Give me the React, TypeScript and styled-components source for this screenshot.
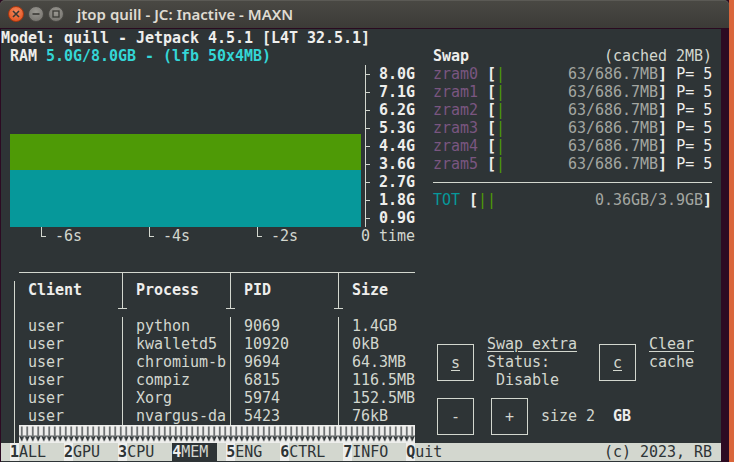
import React from "react";
import styled, { createGlobalStyle, css } from "styled-components";

// terminal cell size
const CW = 9;
const LH = 18;
const LINE = "#d3d7cf";

const at = (col: number, row: number, w: number, h: number) => css`
  grid-column: ${col + 1} / span ${w};
  grid-row: ${row + 1} / span ${h};
`;

const vline = (x = 4, y = 0, h = "100%") =>
  `linear-gradient(${LINE}, ${LINE}) ${x}px ${y}px / 1px ${h} no-repeat`;
const hline = (x = 0, y = 9, w = "100%") =>
  `linear-gradient(${LINE}, ${LINE}) ${x}px ${y}px / ${w} 1px no-repeat`;

const GlobalStyle = createGlobalStyle`
  html, body { margin: 0; padding: 0; }
  body {
    width: 734px;
    height: 462px;
    overflow: hidden;
    background: #d9663b;
  }
`;

const Window = styled.div`
  width: 729px;
  height: 462px;
  display: flex;
  flex-direction: column;
  background: #2c0a22;
`;

const TitleBar = styled.div`
  height: 28px;
  flex: none;
  display: flex;
  align-items: center;
  gap: 4px;
  padding-left: 8px;
  background: linear-gradient(#4a4944, #3c3b37);
  box-shadow: inset 0 1px 0 #5b5a55;
  border-radius: 5px 5px 0 0;
  border-bottom: 1px solid #2a0a20;
`;

const WinButton = styled.span<{ $close?: boolean }>`
  width: 16px;
  height: 16px;
  box-sizing: border-box;
  border-radius: 50%;
  display: flex;
  align-items: center;
  justify-content: center;
  background: ${(p) =>
    p.$close
      ? "radial-gradient(circle at 50% 35%, #f58a5e, #df4a16)"
      : "radial-gradient(circle at 50% 35%, #9a9892, #6f6d68)"};
  border: 1px solid ${(p) => (p.$close ? "#a9380f" : "#4a4945")};
`;

const Title = styled.span`
  margin-left: 9px;
  color: #dfdbd2;
  font-family: "Noto Sans", "Open Sans", sans-serif;
  font-size: 15px;
  font-weight: 600;
`;

const Body = styled.div`
  flex: 1;
  display: flex;
  padding: 0 8px 0 1px;
`;

const Terminal = styled.div`
  display: grid;
  grid-template-columns: repeat(80, ${CW}px);
  grid-template-rows: repeat(24, ${LH}px);
  background: #2e3436;
  color: #d3d7cf;
  font-family: "DejaVu Sans Mono", "Liberation Mono", monospace;
  font-size: 15px;
  line-height: ${LH}px;
  letter-spacing: -0.03px;
  white-space: pre;
`;

const Bold = styled.span`
  font-weight: bold;
  color: #eeeeec;
`;
const Cyan = styled.span`
  color: #34d6d6;
`;
const Teal = styled.span`
  color: #06989a;
`;
const Purple = styled.span`
  color: #7a5680;
`;
const Green = styled.span`
  color: #4e9a06;
`;
const Dim = styled.span`
  color: #a3a6a1;
`;
const Bright = styled.span`
  color: #eeeeec;
`;

const Header = styled.div`
  ${at(0, 0, 80, 1)};
  font-weight: bold;
  color: #eeeeec;
`;

const RamLine = styled.div`
  ${at(0, 1, 47, 1)};
  font-weight: bold;
  color: #eeeeec;
`;

const Chart = styled.div`
  ${at(1, 2, 39, 9)};
  display: flex;
  flex-direction: column;
  justify-content: flex-end;
`;

const Band = styled.div<{ $color: string; $h: number }>`
  height: ${(p) => p.$h}px;
  background: ${(p) => p.$color};
`;

const YAxis = styled.div`
  ${at(40, 2, 6, 9)};
  display: flex;
  flex-direction: column;
`;

const YRow = styled.div`
  display: flex;
  height: ${LH}px;
`;

const YTick = styled.span`
  width: ${2 * CW}px;
  flex: none;
  background: ${vline()}, ${hline(4, 9, "5px")};
`;

const YLabel = styled.span`
  font-weight: bold;
  color: #eeeeec;
`;

const XAxis = styled.div`
  ${at(1, 11, 45, 1)};
  display: flex;
  padding-left: ${3 * CW}px;
`;

const XTick = styled.span`
  width: ${12 * CW}px;
  flex: none;
  display: flex;
`;

const Corner = styled.span`
  width: ${CW}px;
  margin-right: ${CW}px;
  flex: none;
  background: ${vline(4, 0, "10px")}, ${hline(4, 9, "5px")};
`;

const SwapPanel = styled.div`
  ${at(48, 1, 31, 9)};
  display: flex;
  flex-direction: column;
`;

const Line = styled.div`
  height: ${LH}px;
`;

const Rule = styled.div`
  height: ${LH}px;
  background: ${hline()};
`;

const Table = styled.div`
  ${at(1, 13, 45, 10)};
  display: grid;
  grid-template-columns:
    ${CW}px ${11 * CW}px ${CW}px ${11 * CW}px ${CW}px ${11 * CW}px
    ${CW}px ${8 * CW}px;
  grid-template-rows: repeat(10, ${LH}px);
`;

const LeftRule = styled.div`
  grid-column: 1;
  grid-row: 2 / span 9;
  background: ${vline()};
`;

const TopRule = styled.div`
  grid-column: 2 / span 7;
  grid-row: 1;
  background: ${hline()};
`;

const HeadSep = styled.div<{ $col: number }>`
  grid-column: ${(p) => p.$col};
  grid-row: 1 / span 3;
  background: ${vline(4, 9, "37px")}, ${hline(0, 45)};
`;

const BodySep = styled.div<{ $col: number }>`
  grid-column: ${(p) => p.$col};
  grid-row: 4 / span 6;
  background: ${vline()};
`;

const HeadCell = styled.div<{ $col: number }>`
  grid-column: ${(p) => p.$col};
  grid-row: 2;
  padding-left: ${CW}px;
  font-weight: bold;
  color: #eeeeec;
`;

const BodyCell = styled.div<{ $col: number }>`
  grid-column: ${(p) => p.$col};
  grid-row: 4 / span 6;
  padding-left: ${CW}px;
  display: flex;
  flex-direction: column;
`;

const Scroll = styled.div`
  grid-column: 2 / span 7;
  grid-row: 10;
  background: #eeeeec;
  display: flex;
`;

const Controls = styled.div`
  ${at(48, 17, 31, 6)};
  display: flex;
  flex-direction: column;
`;

const ControlRow = styled.div`
  display: flex;
  gap: ${CW}px;
  height: ${3 * LH}px;
`;

const Key = styled.span`
  box-sizing: border-box;
  width: 37px;
  height: 37px;
  margin: 9px 4px 8px;
  flex: none;
  border: 1px solid ${LINE};
  display: flex;
  align-items: center;
  justify-content: center;
`;

const Hot = styled.span`
  text-decoration: underline;
  text-underline-offset: 2px;
`;

const Info = styled.div<{ $cols: number }>`
  width: ${(p) => p.$cols * CW}px;
  flex: none;
  display: flex;
  flex-direction: column;
`;

const SizeText = styled.span`
  align-self: center;
`;

const MenuBar = styled.div`
  ${at(0, 23, 80, 1)};
  display: flex;
  justify-content: space-between;
  background: #d3d7cf;
  color: #2e3436;
`;

const Tab = styled.span<{ $active?: boolean }>`
  background: ${(p) => (p.$active ? "#2e3436" : "transparent")};
  color: ${(p) => (p.$active ? "#d3d7cf" : "inherit")};
`;

const TabKey = styled.span<{ $active?: boolean }>`
  font-weight: bold;
  background: ${(p) => (p.$active ? "transparent" : "#eeeeec")};
  color: ${(p) => (p.$active ? "#eeeeec" : "#2e3436")};
`;

const yLabels = ["8.0G", "7.1G", "6.2G", "5.3G", "4.4G", "3.6G", "2.7G", "1.8G", "0.9G"];

const processes = [
  ["user", "python", "9069", "1.4GB"],
  ["user", "kwalletd5", "10920", "0kB"],
  ["user", "chromium-b", "9694", "64.3MB"],
  ["user", "compiz", "6815", "116.5MB"],
  ["user", "Xorg", "5974", "152.5MB"],
  ["user", "nvargus-da", "5423", "76kB"],
];

const tabs = [
  { key: "1", label: "ALL" },
  { key: "2", label: "GPU" },
  { key: "3", label: "CPU" },
  { key: "4", label: "MEM ", active: true },
  { key: "5", label: "ENG" },
  { key: "6", label: "CTRL" },
  { key: "7", label: "INFO" },
  { key: "Q", label: "uit" },
];

const IconStroke = "#3a3935";

// row of down arrows telling that the process list scrolls
const ScrollArrows = () => (
  <svg width={44 * CW} height={LH} viewBox={`0 0 ${44 * CW} ${LH}`}>
    <defs>
      <pattern id="down" width="5.5" height={LH} patternUnits="userSpaceOnUse">
        <path
          d="M2.75 1.5V15.3M0.6 10.4L2.75 15.3L4.9 10.4"
          fill="none"
          stroke="#2e3436"
          strokeWidth="1.2"
        />
      </pattern>
    </defs>
    <rect width={44 * CW} height={LH} fill="url(#down)" />
  </svg>
);

export default function App() {
  return (
    <>
      <GlobalStyle />
      <Window>
        <TitleBar>
          <WinButton $close>
            <svg width="8" height="8" viewBox="0 0 8 8">
              <path d="M1 1L7 7M7 1L1 7" stroke={IconStroke} strokeWidth="1.6" />
            </svg>
          </WinButton>
          <WinButton>
            <svg width="8" height="8" viewBox="0 0 8 8">
              <path d="M0.5 4H7.5" stroke={IconStroke} strokeWidth="1.6" />
            </svg>
          </WinButton>
          <WinButton>
            <svg width="8" height="8" viewBox="0 0 8 8">
              <rect x="1" y="1" width="6" height="6" fill="none" stroke={IconStroke} strokeWidth="1.3" />
            </svg>
          </WinButton>
          <Title>jtop quill - JC: Inactive - MAXN</Title>
        </TitleBar>

        <Body>
          <Terminal>
            <Header>Model: quill - Jetpack 4.5.1 [L4T 32.5.1]</Header>
            <RamLine>
              {" RAM "}
              <Cyan>5.0G/8.0GB - (lfb 50x4MB)</Cyan>
            </RamLine>

            <Chart>
              <Band $color="#4e9a06" $h={36} />
              <Band $color="#06989a" $h={57} />
            </Chart>

            <YAxis>
              {yLabels.map((l) => (
                <YRow key={l}>
                  <YTick />
                  <YLabel>{l}</YLabel>
                </YRow>
              ))}
            </YAxis>

            <XAxis>
              {["-6s", "-4s", "-2s"].map((t) => (
                <XTick key={t}>
                  <Corner />
                  {t}
                </XTick>
              ))}
              <span>0 time</span>
            </XAxis>

            <SwapPanel>
              <Line>
                <Bold>Swap</Bold>
                {"               (cached 2MB)"}
              </Line>
              {[0, 1, 2, 3, 4, 5].map((i) => (
                <Line key={i}>
                  <Purple>zram{i}</Purple> <Bold>[</Bold>
                  <Green>|</Green>
                  {"       "}
                  <Dim>63/686.7MB</Dim>
                  <Bold>]</Bold>
                  <Bright> P= 5</Bright>
                </Line>
              ))}
              <Rule />
              <Line>
                <Teal>TOT</Teal> <Bold>[</Bold>
                <Green>||</Green>
                {"           "}
                <Dim>0.36GB/3.9GB</Dim>
                <Bold>]</Bold>
              </Line>
            </SwapPanel>

            <Table>
              <TopRule />
              <LeftRule />
              {[3, 5, 7].map((c) => (
                <HeadSep key={c} $col={c} />
              ))}
              {[3, 5, 7].map((c) => (
                <BodySep key={c} $col={c} />
              ))}
              {["Client", "Process", "PID", "Size"].map((h, i) => (
                <HeadCell key={h} $col={2 + i * 2}>
                  {h}
                </HeadCell>
              ))}
              {[0, 1, 2, 3].map((i) => (
                <BodyCell key={i} $col={2 + i * 2}>
                  {processes.map((p, r) => (
                    <Line key={r}>{p[i]}</Line>
                  ))}
                </BodyCell>
              ))}
              <Scroll>
                <ScrollArrows />
              </Scroll>
            </Table>

            <Controls>
              <ControlRow>
                <Key>
                  <Hot>s</Hot>
                </Key>
                <Info $cols={11}>
                  <Line>
                    <Hot>Swap extra</Hot>
                  </Line>
                  <Line>Status:</Line>
                  <Line> Disable</Line>
                </Info>
                <Key>
                  <Hot>c</Hot>
                </Key>
                <Info $cols={7}>
                  <Line>
                    <Hot>Clear</Hot>
                  </Line>
                  <Line>cache</Line>
                </Info>
              </ControlRow>
              <ControlRow>
                <Key>-</Key>
                <Key>+</Key>
                <SizeText>
                  {"size 2  "}
                  <Bold>GB</Bold>
                </SizeText>
              </ControlRow>
            </Controls>

            <MenuBar>
              <span>
                {" "}
                {tabs.map((t, i) => (
                  <React.Fragment key={t.key}>
                    <Tab $active={t.active}>
                      <TabKey $active={t.active}>{t.key}</TabKey>
                      {t.label}
                    </Tab>
                    {i < tabs.length - 1 ? (t.active ? " " : "  ") : ""}
                  </React.Fragment>
                ))}
              </span>
              <span>(c) 2023, RB </span>
            </MenuBar>
          </Terminal>
        </Body>
      </Window>
    </>
  );
}
